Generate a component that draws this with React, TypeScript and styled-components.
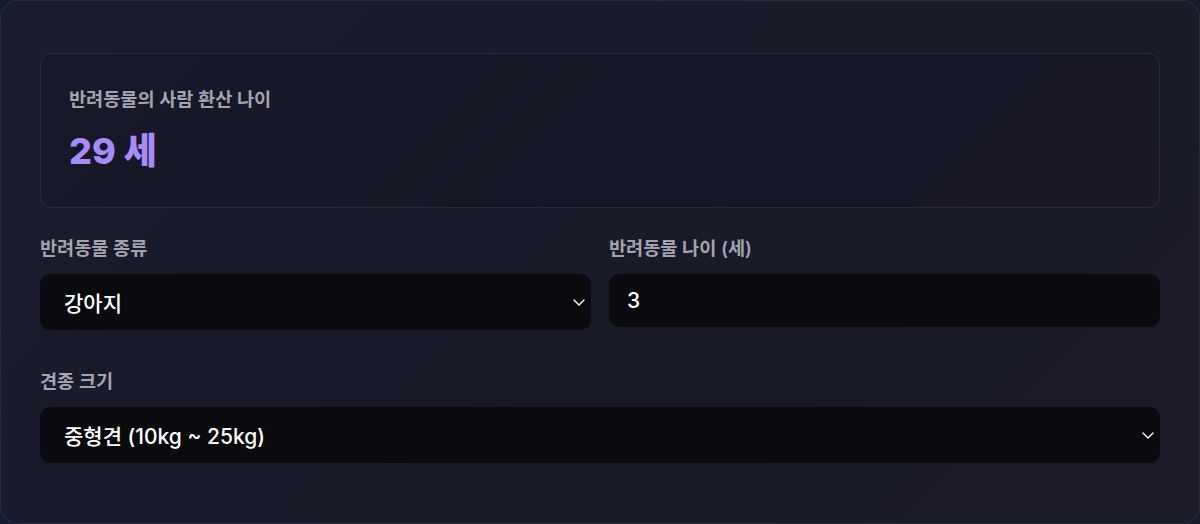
import React from "react";
import styled, { createGlobalStyle } from "styled-components";

const Global = createGlobalStyle`
  html, body {
    margin: 0;
    padding: 0;
    background: #141a2e;
  }
  * { box-sizing: border-box; }
`;

const Card = styled.div`
  width: 1200px;
  height: 524px;
  border: 1px solid rgba(255, 255, 255, 0.07);
  border-radius: 18px;
  background: linear-gradient(135deg, #1a1b2b 0%, #181a28 55%, #1b1a29 100%);
  padding: 52px 39px 0 39px;
  font-family: "Inter", "Noto Sans CJK KR", sans-serif;
  overflow: hidden;
`;

const Result = styled.div`
  height: 155px;
  border: 1px solid rgba(255, 255, 255, 0.08);
  border-radius: 12px;
  background: rgba(20, 21, 33, 0.35);
  padding: 32px 28px 0 28px;
`;

const ResultLabel = styled.div`
  font-size: 18.6px;
  line-height: 26px;
  font-weight: 600;
  color: #a3a3ae;
`;

const ResultValue = styled.div`
  margin-top: 18px;
  font-size: 36px;
  line-height: 42px;
  font-weight: 800;
  color: #a78bfa;
`;

const Grid = styled.div`
  display: grid;
  grid-template-columns: 1fr 1fr;
  column-gap: 18px;
  row-gap: 38px;
  margin-top: 27px;
`;

const Field = styled.div<{ $full?: boolean }>`
  display: flex;
  flex-direction: column;
  gap: 13px;
  grid-column: ${(p) => (p.$full ? "1 / -1" : "auto")};
`;

const Label = styled.label`
  font-size: 18.6px;
  line-height: 26px;
  font-weight: 600;
  color: #a3a3ae;
`;

const Control = styled.div<{ $h: number }>`
  position: relative;
  height: ${(p) => p.$h}px;
  border-radius: 10px;
  background: #0b0b0f;
  display: flex;
  align-items: center;
  color: #ffffff;
  font-size: 21px;
  font-weight: 500;
`;

const SelectText = styled.span`
  padding-left: 24px;
  flex: 1;
`;

const InputText = styled.span`
  padding-left: 18px;
  flex: 1;
`;

const Chevron = styled.svg`
  width: 12px;
  height: 7px;
  margin-right: 6px;
  flex-shrink: 0;
`;

function Arrow() {
  return (
    <Chevron viewBox="0 0 12 7" fill="none">
      <path d="M1 1L6 6L11 1" stroke="#ffffff" strokeWidth="1.4" strokeLinecap="round" strokeLinejoin="round" />
    </Chevron>
  );
}

export default function App() {
  return (
    <>
      <Global />
      <Card>
        <Result>
          <ResultLabel>반려동물의 사람 환산 나이</ResultLabel>
          <ResultValue>29 세</ResultValue>
        </Result>
        <Grid>
          <Field>
            <Label>반려동물 종류</Label>
            <Control $h={56}>
              <SelectText>강아지</SelectText>
              <Arrow />
            </Control>
          </Field>
          <Field>
            <Label>반려동물 나이 (세)</Label>
            <Control $h={53}>
              <InputText>3</InputText>
            </Control>
          </Field>
          <Field $full>
            <Label>견종 크기</Label>
            <Control $h={56}>
              <SelectText>중형견 (10kg ~ 25kg)</SelectText>
              <Arrow />
            </Control>
          </Field>
        </Grid>
      </Card>
    </>
  );
}
